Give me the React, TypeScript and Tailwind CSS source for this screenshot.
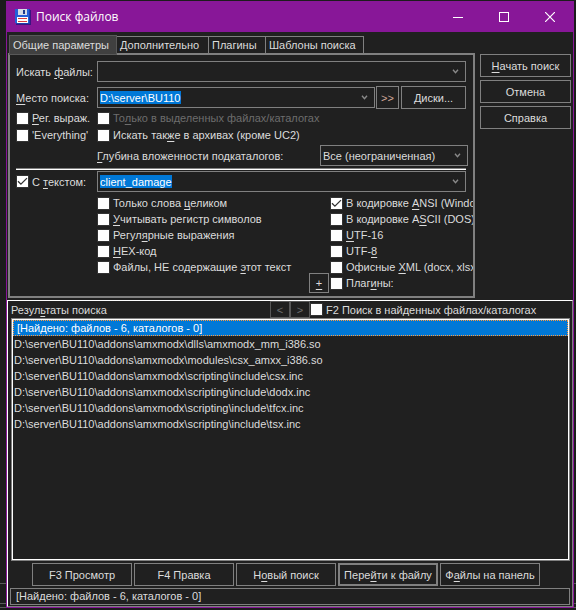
import type { ReactNode } from 'react';

const results = [
    'D:\\server\\BU110\\addons\\amxmodx\\dlls\\amxmodx_mm_i386.so',
    'D:\\server\\BU110\\addons\\amxmodx\\modules\\csx_amxx_i386.so',
    'D:\\server\\BU110\\addons\\amxmodx\\scripting\\include\\csx.inc',
    'D:\\server\\BU110\\addons\\amxmodx\\scripting\\include\\dodx.inc',
    'D:\\server\\BU110\\addons\\amxmodx\\scripting\\include\\tfcx.inc',
    'D:\\server\\BU110\\addons\\amxmodx\\scripting\\include\\tsx.inc',
];

const textOptions = ['Только слова &целиком', '&Учитывать регистр символов', 'Регул&ярные выражения', '&HEX-код', 'Файлы, НЕ содержащие &этот текст'];

const encodings = [
    { label: 'В кодировке &ANSI (Windo', checked: true },
    { label: 'В кодировке A&SCII (DOS)' },
    { label: '&UTF-16' },
    { label: 'UTF-&8' },
    { label: 'Офисные &XML (docx, xlsx' },
];

const actions = ['F3 Просмотр', 'F4 Правка', 'Н&овый поиск', 'Пере&йти к файлу', 'Ф&айлы на панель'];

// "&" marks the accelerator letter
function Mnemonic({ text }: { text: string }) {
    const at = text.indexOf('&');
    if (at < 0) return <>{text}</>;
    return (
        <>
            {text.slice(0, at)}
            <u className="underline-offset-2">{text[at + 1]}</u>
            {text.slice(at + 2)}
        </>
    );
}

function Check({ label, checked, disabled }: { label: string; checked?: boolean; disabled?: boolean }) {
    return (
        <label className={`flex h-4 items-center gap-[3px] whitespace-nowrap ${disabled ? 'text-[#6d6d6d]' : ''}`}>
            <span className="grid shrink-0">
                <input type="checkbox" defaultChecked={checked} disabled={disabled} className="peer col-start-1 row-start-1 size-[13px] appearance-none border border-[#333] bg-white" />
                <svg viewBox="0 0 13 13" className="pointer-events-none col-start-1 row-start-1 hidden size-[13px] peer-checked:block" fill="none" stroke="#333" strokeWidth="1.3">
                    <path d="M2 6.3 4.9 9.2 11 3.1" />
                </svg>
            </span>
            <span><Mnemonic text={label} /></span>
        </label>
    );
}

function Chevron() {
    return (
        <svg viewBox="0 0 7 5" className="h-[5px] w-[7px] shrink-0" fill="none" stroke="#8a8a8a" strokeWidth="1.4">
            <path d="M1 .8 3.5 3.6 6 .8" />
        </svg>
    );
}

function Combo({ id, label, value }: { id: string; label?: string; value: string }) {
    return (
        <div className="flex h-[21px] min-w-0 flex-1 items-center justify-between border border-[#808080] pr-1.5 pl-0.5">
            <input
                id={id}
                aria-label={label}
                defaultValue={value}
                className={value ? 'field-sizing-content h-[13px] bg-[#0078d7] text-white outline-none' : 'h-[13px] min-w-0 flex-1 outline-none'}
            />
            <button aria-label="Открыть список"><Chevron /></button>
        </div>
    );
}

function Button({ children, className = 'border' }: { children: ReactNode; className?: string }) {
    return <button className={`h-[23px] border-[#808080] whitespace-nowrap ${className}`}>{children}</button>;
}

function Floppy() {
    return (
        <svg viewBox="0 0 16 16" className="size-4" shapeRendering="crispEdges">
            <path d="M1 1h15v15H1z" fill="#3a1480" />
            <path d="M0 0h15v15H1l-1-1z" fill="#1c3fae" />
            <path d="M0 0h14v14H0z" fill="#2460d8" />
            <path d="M3 0h9v6H3z" fill="#d5dce6" />
            <path d="M8 1h2v4H8z" fill="#1c3a8c" />
            <path d="M2 8h11v6H2z" fill="#fff" />
            <path d="M3 9h9v1H3zM3 12h9v1H3z" fill="#d83c3c" />
        </svg>
    );
}

// Panel borders of the application behind the dialog
function Backdrop({ className }: { className: string }) {
    return (
        <div className={`flex shrink-0 flex-col justify-end ${className}`}>
            <div className="h-[21px] border-y border-[#5a5a5a]" />
            <div className="mt-[3px] mb-0.5 border-t border-[#5a5a5a]" />
        </div>
    );
}

export default function App() {
    return (
        <div className="flex min-h-screen bg-[#1c1c1c] font-['Liberation_Sans',Arial,sans-serif] text-[11px] leading-4 text-[#dcdcdc]">
            <Backdrop className="w-1.5" />
            <main className="mt-px mb-0.5 flex min-w-0 flex-1 flex-col border border-[#881798] bg-[#202020]">
                <header className="flex h-[30px] items-center bg-[#881798] pl-2 text-white">
                    <Floppy />
                    <h1 className="ml-[5px] flex-1 font-['Open_Sans','Noto_Sans',sans-serif] text-[12px]">Поиск файлов</h1>
                    <button aria-label="Свернуть" className="flex w-[46px] justify-center">
                        <svg viewBox="0 0 10 10" className="size-2.5" stroke="#fff" shapeRendering="crispEdges"><path d="M0 5.5h10" /></svg>
                    </button>
                    <button aria-label="Развернуть" className="flex w-[46px] justify-center">
                        <svg viewBox="0 0 10 10" className="size-2.5" fill="none" stroke="#fff" shapeRendering="crispEdges"><path d="M.5.5h9v9h-9z" /></svg>
                    </button>
                    <button aria-label="Закрыть" className="flex w-[46px] justify-center">
                        <svg viewBox="0 0 10 10" className="size-2.5" stroke="#fff" strokeWidth="1.2"><path d="m0 0 10 10M10 0 0 10" /></svg>
                    </button>
                </header>

                <div className="flex gap-[5px] pt-[3px] pr-0.5 pl-px">
                    <div className="flex min-w-0 flex-1 flex-col">
                        <nav className="flex h-[18px] items-end pl-px text-left">
                            <button className="z-10 -mb-0.5 h-5 w-[108px] border border-[#585858] bg-[#404040] pl-[3px] text-left">Общие параметры</button>
                            <button className="h-[17px] w-[92px] border-t border-r border-[#808080] pl-[3px] text-left">Дополнительно</button>
                            <button className="h-[17px] w-[57px] border-t border-r border-[#808080] pl-[3px] text-left">Плагины</button>
                            <button className="h-[17px] w-[98px] border-t border-r border-[#808080] pl-[3px] text-left">Шаблоны поиска</button>
                        </nav>
                        <section className="border-2 border-[#808080] pt-1.5 pb-[3px] pl-1.5">
                            <div className="flex flex-col pr-[7px]">
                                <div className="flex items-center">
                                    <label htmlFor="mask" className="w-[81px]"><Mnemonic text="Искать &файлы:" /></label>
                                    <Combo id="mask" value="" />
                                </div>
                                <div className="mt-1 flex items-center">
                                    <label htmlFor="place" className="w-[81px]"><Mnemonic text="&Место поиска:" /></label>
                                    <Combo id="place" value="D:\server\BU110" />
                                    <Button className="ml-px w-[23px] border text-[#d0a898]">&gt;&gt;</Button>
                                    <Button className="ml-0.5 w-[65px] border"><Mnemonic text="&Диски..." /></Button>
                                </div>
                                <div className="mt-px grid grid-cols-[81px_1fr] gap-y-px">
                                    <Check label="&Рег. выраж." />
                                    <Check label="То&лько в выделенных файлах/каталогах" disabled />
                                    <Check label="'Everything'" />
                                    <Check label="Искать так&же в архивах (кроме UC2)" />
                                </div>
                            </div>
                            <div className="mt-0.5 flex items-center justify-between pr-[5px] pl-[81px]">
                                <label htmlFor="depth"><Mnemonic text="&Глубина вложенности подкаталогов:" /></label>
                                <div className="grid w-[148px] items-center">
                                    <select id="depth" className="col-start-1 row-start-1 h-[21px] appearance-none border border-[#808080] bg-[#202020] pl-0.5">
                                        <option>Все (неограниченная)</option>
                                    </select>
                                    <span className="pointer-events-none col-start-1 row-start-1 mr-[7px] justify-self-end"><Chevron /></span>
                                </div>
                            </div>
                            <hr className="mt-0.5 mr-[7px] border-t border-b border-t-[#808080] border-b-white" />
                            <div className="mt-px mr-[7px] flex items-center">
                                <div className="w-[81px]"><Check label="С &текстом:" checked /></div>
                                <Combo id="text" label="С текстом" value="client_damage" />
                            </div>
                            <div className="mt-[3px] flex pl-[81px]">
                                <div className="flex flex-1 flex-col">
                                    {textOptions.map((label) => <Check key={label} label={label} />)}
                                </div>
                                <div className="flex w-[143px] flex-col overflow-hidden">
                                    {encodings.map((item) => <Check key={item.label} label={item.label} checked={item.checked} />)}
                                </div>
                            </div>
                            <div className="-mt-0.5 flex items-center justify-end">
                                <button className="mr-px size-5 border border-[#808080]"><u className="underline-offset-2">+</u></button>
                                <div className="w-[143px]"><Check label="Плаг&ины:" /></div>
                            </div>
                        </section>
                    </div>
                    <aside className="mt-[19px] flex w-[91px] flex-col gap-[3px]">
                        <Button><Mnemonic text="&Начать поиск" /></Button>
                        <Button>Отмена</Button>
                        <Button>Справка</Button>
                    </aside>
                </div>

                <section className="mt-0.5 flex flex-1 flex-col border border-t-white border-r-[#808080] border-b-[#808080] border-l-white pr-0.5 pb-px pl-0.5">
                    <div className="flex h-[17px] items-center">
                        <h2 className="w-[260px] pl-px"><Mnemonic text="Резул&ьтаты поиска" /></h2>
                        <button aria-label="Назад" className="h-[17px] w-5 border border-[#585858] text-[#6d6d6d]">&lt;</button>
                        <button aria-label="Вперёд" className="h-[17px] w-5 border border-[#585858] text-[#6d6d6d]">&gt;</button>
                        <Check label="F2 Поиск в найденных файлах/каталогах" />
                    </div>
                    <ul className="ml-px flex-1 border border-[#808080] outline-1 -outline-offset-2 outline-white">
                        <li className="m-px mb-0 border border-dotted border-[#ff9a3c] bg-[#0078d7] pl-[3px] leading-[14px] text-white">[Найдено: файлов - 6, каталогов - 0]</li>
                        {results.map((path) => (
                            <li key={path} className="pl-0.5">{path}</li>
                        ))}
                    </ul>
                    <div className="mt-0.5 mr-[30px] ml-[22px] grid grid-cols-5 gap-0.5">
                        {actions.map((text) => (
                            <Button key={text} className={text.startsWith('Пере') ? 'border-2' : 'border'}><Mnemonic text={text} /></Button>
                        ))}
                    </div>
                    <footer className="mt-0.5 h-[17px] border border-[#808080] pl-[5px] leading-[15px]">[Найдено: файлов - 6, каталогов - 0]</footer>
                </section>
            </main>
            <Backdrop className="w-0.5" />
        </div>
    );
}
